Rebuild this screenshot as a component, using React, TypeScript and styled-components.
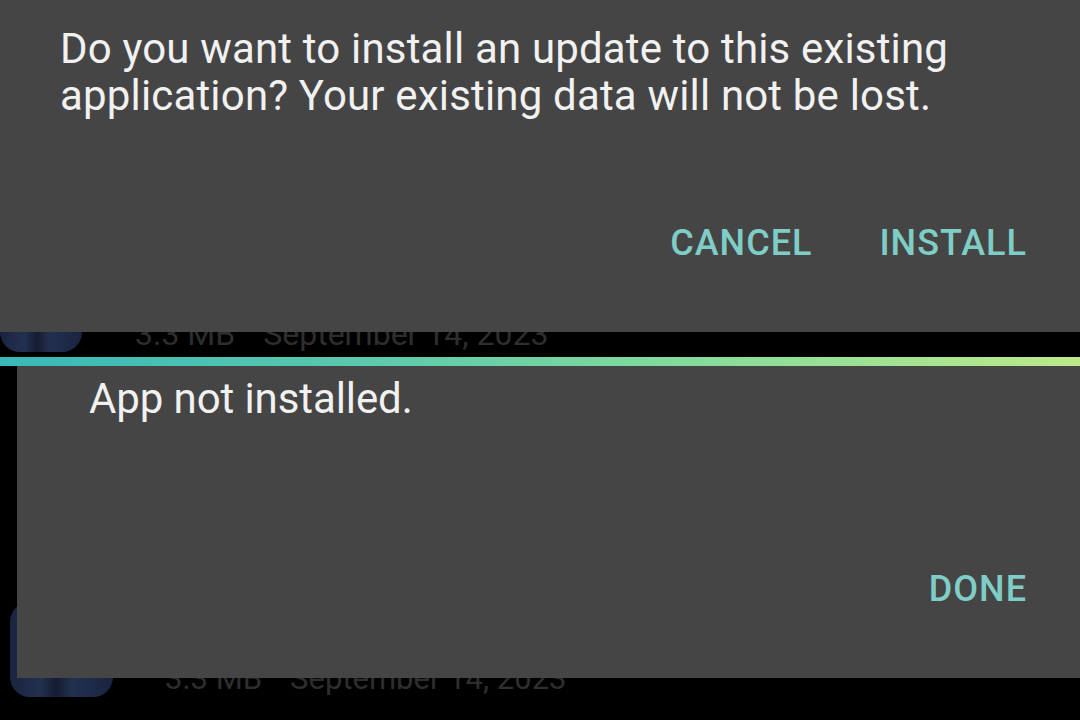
import React from "react";
import styled, { createGlobalStyle } from "styled-components";

const Global = createGlobalStyle`
  html, body { margin: 0; padding: 0; background: #000; }
  body { font-family: Roboto, "Noto Sans", "Liberation Sans", sans-serif; }
  * { box-sizing: border-box; }
`;

const Screen = styled.div`
  position: relative;
  width: 1080px;
  height: 720px;
  overflow: hidden;
  background: #000;
`;

/* ---------- file list underneath the dialogs ---------- */
const FileList = styled.div`
  display: flex;
  flex-direction: column;
`;

const FileRow = styled.div<{ $height: number; $indent: number; $gap: number }>`
  display: flex;
  align-items: flex-end;
  height: ${(p) => p.$height}px;
  padding-left: ${(p) => p.$indent}px;
  gap: ${(p) => p.$gap}px;
`;

const FileIcon = styled.div<{ $w: number; $h: number }>`
  flex: none;
  width: ${(p) => p.$w}px;
  height: ${(p) => p.$h}px;
  border-radius: 20px;
  background: linear-gradient(90deg, #1a2440 0%, #22304f 30%, #141c30 45%, #22304f 60%, #1a2440 100%);
`;

const FileMeta = styled.div<{ $size: number }>`
  display: flex;
  gap: 28px;
  margin-bottom: 2px;
  font-size: ${(p) => p.$size}px;
  line-height: 32px;
  color: #2e2e2e;
  white-space: nowrap;
`;

/* ---------- dialogs ---------- */
const InstallDialog = styled.div`
  position: absolute;
  top: 0;
  left: 0;
  right: 0;
  height: 332px;
  background: #454545;
  padding: 25px 53px 0 60px;
  display: flex;
  flex-direction: column;
`;

const Message = styled.p<{ $indent?: number; $tracking?: number }>`
  margin: 0;
  padding-left: ${(p) => p.$indent ?? 0}px;
  font-size: 42px;
  line-height: 47px;
  font-weight: 400;
  letter-spacing: ${(p) => p.$tracking ?? 0}px;
  color: #f1f1f1;
  white-space: nowrap;
`;

const Actions = styled.div<{ $top: number }>`
  display: flex;
  justify-content: flex-end;
  gap: 67px;
  margin-top: ${(p) => p.$top}px;
`;

const TextButton = styled.button`
  background: none;
  border: none;
  padding: 0;
  font-family: inherit;
  font-size: 36px;
  line-height: 36px;
  font-weight: 500;
  letter-spacing: 1px;
  color: #7fcdc6;
  cursor: pointer;
`;

const ResultLayer = styled.div`
  position: absolute;
  top: 357px;
  left: 0;
  right: 0;
  display: flex;
  flex-direction: column;
`;

const ProgressBar = styled.div`
  height: 9px;
  background: linear-gradient(90deg, #38b8b8 0%, #5ccaac 35%, #86dc9a 65%, #bde98a 100%);
`;

const ResultDialog = styled.div`
  margin-left: 17px;
  height: 312px;
  background: #454545;
  padding: 9px 53px 0 55px;
  display: flex;
  flex-direction: column;
`;

export default function App() {
  return (
    <>
      <Global />
      <Screen>
        <FileList>
          <FileRow $height={352} $indent={0} $gap={53}>
            <FileIcon $w={82} $h={70} />
            <FileMeta $size={32}>
              <span>3.3 MB</span>
              <span>September 14, 2023</span>
            </FileMeta>
          </FileRow>
          <FileRow $height={345} $indent={10} $gap={52}>
            <FileIcon $w={103} $h={95} />
            <FileMeta $size={31}>
              <span>3.3 MB</span>
              <span>September 14, 2023</span>
            </FileMeta>
          </FileRow>
        </FileList>

        <InstallDialog>
          <Message $tracking={0.17}>
            Do you want to install an update to this existing
            <br />
            application? Your existing data will not be lost.
          </Message>
          <Actions $top={106}>
            <TextButton>CANCEL</TextButton>
            <TextButton>INSTALL</TextButton>
          </Actions>
        </InstallDialog>

        <ResultLayer>
          <ProgressBar />
          <ResultDialog>
            <Message $indent={17} $tracking={-0.1}>App not installed.</Message>
            <Actions $top={149}>
              <TextButton>DONE</TextButton>
            </Actions>
          </ResultDialog>
        </ResultLayer>
      </Screen>
    </>
  );
}
